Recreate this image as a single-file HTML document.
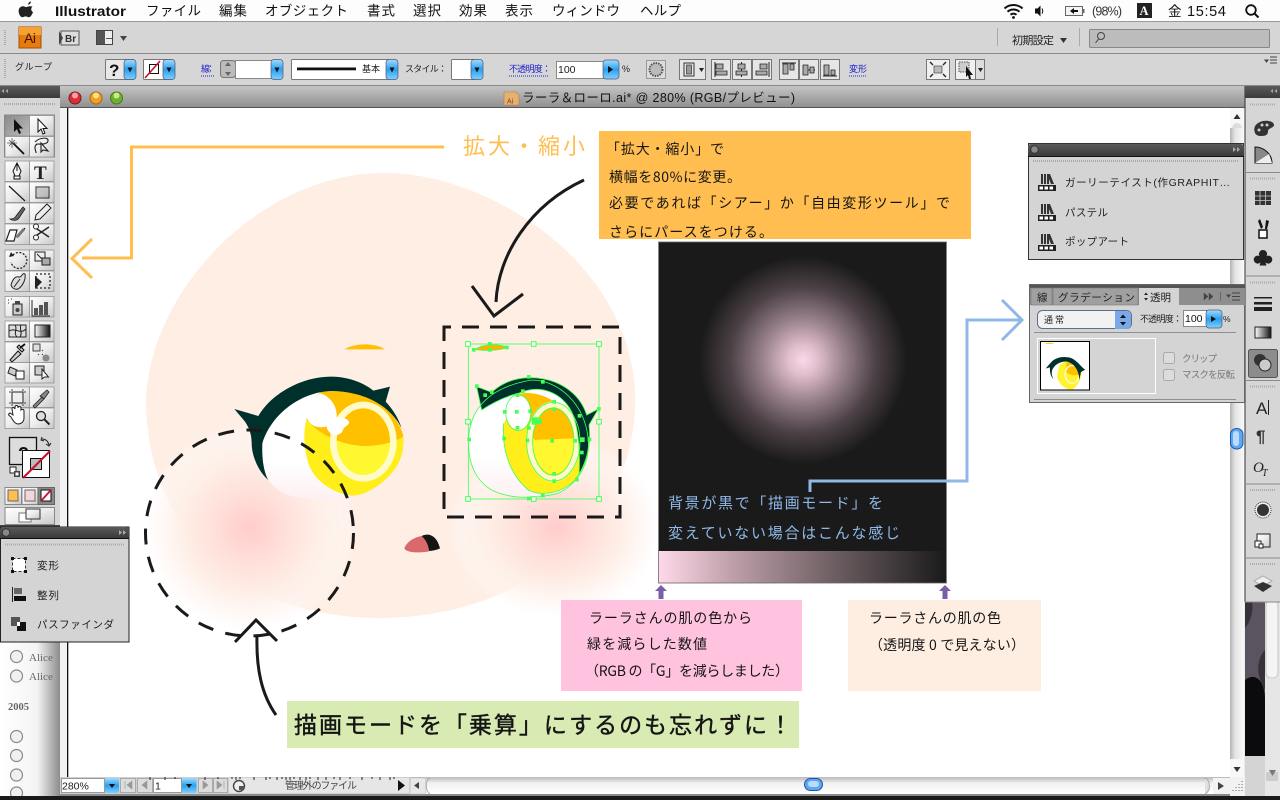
<!DOCTYPE html>
<html lang="ja"><head><meta charset="utf-8"><title>Illustrator</title>
<style>
html,body{margin:0;padding:0;background:#fff;width:1280px;height:800px;overflow:hidden}
svg{display:block}
text{font-family:"Liberation Sans","Noto Sans CJK JP",sans-serif;white-space:pre}
.m{font-size:13.5px;fill:#111}
.h{font-family:"WenQuanYi Zen Hei","Noto Sans CJK JP",sans-serif;font-size:14px;fill:#151515}
.s{font-size:9px;fill:#222}
.b{font-size:9px;fill:#2222cc}
.p{font-size:10.5px;fill:#222}
.g{font-size:9.5px;fill:#777}
.hd{fill:#44ff55;stroke:none}
</style></head><body>
<svg xmlns="http://www.w3.org/2000/svg" width="1280" height="800" viewBox="0 0 1280 800">
<defs>
<linearGradient id="tb" x1="0" y1="0" x2="0" y2="1"><stop offset="0" stop-color="#c4c4c4"/><stop offset="1" stop-color="#8e8e8e"/></linearGradient>
<linearGradient id="dh" x1="0" y1="0" x2="0" y2="1"><stop offset="0" stop-color="#5a5a5a"/><stop offset="1" stop-color="#3a3a3a"/></linearGradient>
<linearGradient id="bl" x1="0" y1="0" x2="0" y2="1"><stop offset="0" stop-color="#9fdcff"/><stop offset=".5" stop-color="#2aa0ee"/><stop offset="1" stop-color="#7fd0ff"/></linearGradient>
<linearGradient id="cell" x1="0" y1="0" x2="1" y2="1"><stop offset="0" stop-color="#fff"/><stop offset=".5" stop-color="#ececec"/><stop offset="1" stop-color="#c8c8c8"/></linearGradient>
<linearGradient id="sel" x1="0" y1="0" x2="1" y2="1"><stop offset="0" stop-color="#8a8a8a"/><stop offset="1" stop-color="#bbb"/></linearGradient>
<linearGradient id="desk" x1="0" y1="0" x2="1" y2="0"><stop offset="0" stop-color="#fff"/><stop offset=".62" stop-color="#f4f4f4"/><stop offset="1" stop-color="#8c8c8c"/></linearGradient>
<linearGradient id="vs" x1="0" y1="0" x2="1" y2="0"><stop offset="0" stop-color="#b4b4b4"/><stop offset=".35" stop-color="#e4e4e4"/><stop offset="1" stop-color="#fafafa"/></linearGradient>
<linearGradient id="hs" x1="0" y1="0" x2="0" y2="1"><stop offset="0" stop-color="#b8b8b8"/><stop offset=".35" stop-color="#f0f0f0"/><stop offset="1" stop-color="#fff"/></linearGradient>
<linearGradient id="bar" x1="0" y1="0" x2="1" y2="0"><stop offset="0" stop-color="#ffd9ea"/><stop offset=".25" stop-color="#bfa0aa"/><stop offset=".6" stop-color="#6f6064"/><stop offset="1" stop-color="#1a1a1a"/></linearGradient>
<linearGradient id="ey" x1="0" y1="0" x2="0" y2="1"><stop offset=".65" stop-color="#fff"/><stop offset="1" stop-color="#fdf0f2"/></linearGradient>
<linearGradient id="gr" x1="0" y1="0" x2="1" y2="0"><stop offset="0" stop-color="#fff"/><stop offset="1" stop-color="#111"/></linearGradient>
<radialGradient id="glow" gradientUnits="userSpaceOnUse" cx="803" cy="360" r="104"><stop offset="0" stop-color="#fcd9e9"/><stop offset=".14" stop-color="#e2bfcd"/><stop offset=".4" stop-color="#97808a"/><stop offset=".7" stop-color="#4c4146"/><stop offset="1" stop-color="#1a1a1a"/></radialGradient>
<radialGradient id="ck"><stop offset="0" stop-color="#ffcccc"/><stop offset=".32" stop-color="#ffdfd9"/><stop offset=".62" stop-color="#feeee6" stop-opacity=".95"/><stop offset=".85" stop-color="#fff6f3" stop-opacity=".6"/><stop offset="1" stop-color="#fff" stop-opacity="0"/></radialGradient>
<g id="c"><rect width="24.5" height="20.5" fill="url(#cell)" stroke="#8a8a8a" stroke-width=".7"/></g>
<g id="bb"><rect width="12" height="20" rx="3" fill="url(#bl)" stroke="#557" stroke-width=".7"/><path d="M3.5 8h5l-2.5 5z" fill="#111"/></g>
<g id="lib"><rect x="-9" y="3" width="18" height="6" fill="#222"/><rect x="-7.5" y="4.5" width="3.5" height="3" fill="#fff"/><rect x="-2.5" y="4.5" width="3.5" height="3" fill="#fff"/><rect x="2.5" y="4.5" width="3.5" height="3" fill="#fff"/><path d="M-6-8h2v10h-2zM-3-8h2v10h-2zM0-8l3 0 4 10h-3l-2-5v5h-2z" fill="#333"/></g>
<g id="ab"><rect width="19" height="20" fill="#e6e6e6" stroke="#777"/></g>
<g id="radio"><circle r="6" fill="#f0f0f0" stroke="#888" stroke-width="1.2"/></g>
</defs>

<!-- desktop -->
<rect width="1280" height="800" fill="#ddd"/>
<rect x="0" y="640" width="60" height="156" fill="url(#desk)"/>
<use href="#radio" x="16.5" y="656.500"/><use href="#radio" x="16.5" y="676"/>
<text x="29" y="661" font-size="11" fill="#666" style="font-family:'Liberation Serif',serif">Alice</text>
<text x="29" y="680" font-size="11" fill="#666" style="font-family:'Liberation Serif',serif">Alice</text>
<text x="8" y="710" font-size="10.500" font-weight="bold" fill="#666" style="font-family:'Liberation Serif',serif">2005</text>
<use href="#radio" x="16.5" y="736.500"/><use href="#radio" x="16.5" y="755.500"/><use href="#radio" x="16.5" y="775"/><use href="#radio" x="16.5" y="793"/>

<!-- right desktop piece -->
<rect x="1245" y="600" width="20" height="156" fill="#5a5360"/>
<path d="M1245 680C1255 672 1265 680 1265 700V756H1245Z" fill="#0b0a0c"/>
<path d="M1245 600h7c2 14-3 24-7 28zM1265 650c-8 8-10 25 0 40z" fill="#37323a"/>
<rect x="1245" y="756" width="20" height="40" fill="#d4d4d4"/>
<rect x="1265" y="600" width="15" height="196" fill="#e6e6e6"/>
<rect x="1266" y="600" width="12" height="78" rx="5" fill="#f4f4f4" stroke="#aaa" stroke-width=".6"/>
<rect x="1266" y="772" width="12" height="9" fill="#ccc"/>
<path d="M1269 770h7l-3.500 6z" fill="#777"/>

<!-- menu bar -->
<rect width="1280" height="21" fill="#fdfdfd"/>
<rect y="21" width="1280" height="1" fill="#9a9a9a"/>
<g transform="translate(-4.500 -.8) scale(1.18)">
<path d="M27.500 4.500c.3-1.400 1.200-2.400 2.500-2.700.1 1.500-1 2.800-2.500 2.700zM31.500 6.200c-1.500.8-1.800 3.500.3 4.800-.8 2-2.100 4.500-3.700 4.300-1-.1-1.600-.7-2.600-.7s-1.600.6-2.600.7C20.500 15.300 18.800 10.500 20 8c.9-2 3.500-2.500 5-1.600.6.300 1.300.3 2.100 0 1.500-.7 3.400-.5 4.400-.200z" fill="#222"/>
</g>
<text x="55" y="16" font-size="14" font-weight="bold" fill="#111" textLength="71" lengthAdjust="spacingAndGlyphs">Illustrator</text>
<text class="m" x="146" y="15.500" textLength="55">ファイル</text>
<text class="m" x="219" y="15.500" textLength="28">編集</text>
<text class="m" x="265" y="15.500" textLength="83">オブジェクト</text>
<text class="m" x="367" y="15.500" textLength="28">書式</text>
<text class="m" x="413" y="15.500" textLength="28">選択</text>
<text class="m" x="459" y="15.500" textLength="28">効果</text>
<text class="m" x="505" y="15.500" textLength="28">表示</text>
<text class="m" x="552" y="15.500" textLength="68">ウィンドウ</text>
<text class="m" x="640" y="15.500" textLength="41">ヘルプ</text>
<path d="M1004.500 8.500a13.500 13.500 0 0 1 18 0M1007.500 11.800a9 9 0 0 1 12 0M1010.500 14.800a4.500 4.500 0 0 1 6 0" fill="none" stroke="#111" stroke-width="2"/><circle cx="1013.500" cy="17.500" r="1.400" fill="#111"/>
<path d="M1035 8.500h2.500l3-3v11l-3-3H1035z" fill="#111"/><path d="M1042 8.500q1.500 2.500 0 5" fill="none" stroke="#111"/>
<rect x="1065.500" y="6.500" width="17" height="9" fill="#f4f4f4" stroke="#666"/><path d="M1070 11l4-3v2h4v2h-4v2z" fill="#111"/><rect x="1083" y="9" width="1.500" height="4" fill="#666"/>
<text x="1092" y="15.500" font-size="12.500" fill="#333" textLength="30">(98%)</text>
<rect x="1137" y="3" width="15" height="15" fill="#222"/><text x="1139.500" y="15" font-size="12.500" font-weight="bold" fill="#fff" style="font-family:'Liberation Serif',serif">A</text>
<text class="m" x="1168" y="16">金</text>
<text x="1187" y="16" font-size="14.500" fill="#111" textLength="39">15:54</text>
<circle cx="1251" cy="10" r="4.800" fill="none" stroke="#111" stroke-width="1.800"/><path d="M1254.500 13.500l4 4" stroke="#111" stroke-width="2"/>

<!-- app bar -->
<rect y="22" width="1280" height="31" fill="#d6d6d6"/>
<rect y="53" width="1280" height="1" fill="#8a8a8a"/>
<path d="M5 30v16" stroke="#aaa" stroke-dasharray="1 1" stroke-width="2"/>
<rect x="19" y="27" width="22" height="21" fill="#e77b10" stroke="#a65000"/>
<rect x="19" y="27" width="22" height="8" fill="#f7a033"/>
<text x="24" y="43" font-size="14" fill="#3a1800" textLength="12">Ai</text>
<rect x="61" y="31" width="18" height="14" fill="#ddd" stroke="#555"/><path d="M59 31l4 7-4 7z" fill="#444"/>
<text x="65" y="42" font-size="10" font-weight="bold" fill="#333">Br</text>
<rect x="96.500" y="30.500" width="16" height="14" fill="#eee" stroke="#444"/><rect x="97" y="31" width="8" height="13" fill="#555"/><rect x="106" y="38" width="6" height="1" fill="#555"/>
<path d="M120 36h7l-3.500 5z" fill="#444"/>
<path d="M997.500 28v18M1079.500 28v18" stroke="#aaa"/>
<text x="1012" y="44" font-size="11" fill="#222" textLength="42">初期設定</text><path d="M1060 38h7l-3.500 5z" fill="#333"/>
<rect x="1089.500" y="29.500" width="180" height="18" rx="1" fill="#bcbcbc" stroke="#888"/>
<circle cx="1101" cy="36" r="3.500" fill="none" stroke="#444"/><path d="M1098.500 39l-3 4" stroke="#444"/>

<!-- control bar -->
<rect y="54" width="1280" height="32" fill="#d6d6d6"/>
<rect y="85" width="1280" height="1" fill="#8a8a8a"/>
<path d="M5 59v20" stroke="#aaa" stroke-dasharray="1 1" stroke-width="2"/>
<text class="s" x="15" y="70" textLength="37">グループ</text>
<rect x="105.500" y="59.500" width="28" height="20" rx="1" fill="#e8e8e8" stroke="#777"/><use href="#bb" x="124" y="59.500"/>
<text x="109" y="76" font-size="17" font-weight="bold" fill="#111">?</text>
<rect x="143.500" y="59.500" width="28" height="20" rx="1" fill="#fff" stroke="#777"/><use href="#bb" x="163" y="59.500"/>
<rect x="149.500" y="64.500" width="9" height="9" fill="#fff" stroke="#111"/><path d="M145 78l15-17" stroke="#c8102e" stroke-width="1.600"/>
<text class="b" x="201" y="72" textLength="14">線：</text><path d="M201 76h14" stroke="#2222cc" stroke-dasharray="1 1"/>
<rect x="220.500" y="60.500" width="15" height="17" rx="3" fill="#bbb" stroke="#777"/><path d="M228 62l3 4h-6zM228 76l-3-4h6z" fill="#666"/>
<rect x="235.500" y="60.500" width="36" height="18" fill="#fff" stroke="#888"/><use href="#bb" x="271" y="59.500"/>
<rect x="291.500" y="59.500" width="98" height="20" rx="1" fill="#fff" stroke="#777"/><rect x="297" y="67.500" width="59" height="2.800" fill="#111"/>
<text class="s" x="362" y="72" textLength="18">基本</text><use href="#bb" x="386" y="59.500"/>
<text class="s" x="405" y="72" textLength="42">スタイル：</text>
<rect x="451.500" y="59.500" width="24" height="20" rx="1" fill="#fff" stroke="#777"/><use href="#bb" x="471" y="59.500"/>
<text class="b" x="509" y="72" textLength="42">不透明度：</text><path d="M509 76h40" stroke="#2222cc" stroke-dasharray="1 1"/>
<rect x="556.500" y="61.500" width="47" height="17" fill="#fff" stroke="#888"/><text x="558" y="73" font-size="10.500" fill="#222">100</text>
<rect x="603" y="60" width="16" height="19" rx="3" fill="url(#bl)" stroke="#557" stroke-width=".7"/><path d="M608 66l5 3.500-5 3.500z" fill="#111"/>
<text x="622" y="72" font-size="9" fill="#222">%</text>
<rect x="646.500" y="60.500" width="19" height="18" fill="#ddd" stroke="#999"/><circle cx="656" cy="69.500" r="6.500" fill="#bbb" stroke="#555" stroke-dasharray="1.500 1" stroke-width="2"/>
<rect x="679.500" y="59.500" width="26" height="20" fill="#e6e6e6" stroke="#777"/><rect x="684" y="63" width="10" height="13" fill="none" stroke="#333"/><rect x="686.500" y="65" width="5" height="9" fill="#999" stroke="#333" stroke-width=".7"/><path d="M699 68h5l-2.500 4z" fill="#222"/>
<use href="#ab" x="711.500" y="59.500"/><use href="#ab" x="732.500" y="59.500"/><use href="#ab" x="752.500" y="59.500"/><use href="#ab" x="779.500" y="59.500"/><use href="#ab" x="799.500" y="59.500"/><use href="#ab" x="820.500" y="59.500"/>
<path d="M715 62v15M769 62v15M741.500 62v15M782 63h14M803 70h12M823 76h14" stroke="#222" fill="none"/>
<path d="M716 64h7v5h-7zM716 71h11v4h-11zM738 64h7v5h-7zM736 71h11v4h-11zM760 64h7v5h-7zM756 71h11v4h-11zM783 64h5v10h-5zM790 64h4v6h-4zM803 65h5v10h-5zM810 67h4v6h-4zM824 65h5v10h-5zM831 70h4v5h-4z" fill="#aaa" stroke="#222" stroke-width=".8"/>
<text class="b" x="849" y="72" textLength="18">変形</text><path d="M849 76h18" stroke="#2222cc" stroke-dasharray="1 1"/>
<rect x="926.500" y="59.500" width="23" height="20" fill="#f0f0f0" stroke="#777"/><rect x="934" y="66" width="8" height="7" fill="#bbb" stroke="#333" stroke-width=".6"/><path d="M930 62l3 3M946 62l-3 3M930 77l3-3M946 77l-3-3" stroke="#222" stroke-width="1.400"/>
<rect x="955.500" y="59.500" width="20" height="20" fill="#f0f0f0" stroke="#777"/><rect x="975.500" y="59.500" width="9" height="20" fill="#ddd" stroke="#777"/>
<rect x="959" y="62" width="10" height="10" fill="#ccc" stroke="#555" stroke-dasharray="1.500 1"/><path d="M966 66l7 9-3 0 1 4-2 0-1-4-2 2z" fill="#111"/><path d="M978 68h5l-2.500 4z" fill="#222"/>
<path d="M1265 60h3l-1.500 2zM1270 57h7M1270 60h7M1270 63h7" stroke="#444" fill="#444" stroke-width="1"/>

<!-- left panel -->
<rect x="0" y="86" width="60" height="442" fill="#d6d6d6"/>
<rect x="0" y="86" width="60" height="12" fill="url(#dh)"/>
<path d="M4 89l-2.500 2 2.500 2zM8 89l-2.500 2 2.500 2z" fill="#aaa"/>
<path d="M4 104h52" stroke="#aaa" stroke-dasharray="1 1" stroke-width="2"/>
<rect x="4.500" y="115" width="50" height="42" fill="none" stroke="#888"/>
<g>
<rect x="5" y="115.500" width="24.500" height="20.500" fill="url(#sel)" stroke="#8a8a8a" stroke-width=".7"/>
<use href="#c" x="29.500" y="115.500"/><use href="#c" x="5" y="136.500"/><use href="#c" x="29.500" y="136.500"/>
<use href="#c" x="5" y="161"/><use href="#c" x="29.500" y="161"/><use href="#c" x="5" y="182"/><use href="#c" x="29.500" y="182"/><use href="#c" x="5" y="203"/><use href="#c" x="29.500" y="203"/><use href="#c" x="5" y="224"/><use href="#c" x="29.500" y="224"/>
<use href="#c" x="5" y="250"/><use href="#c" x="29.500" y="250"/><use href="#c" x="5" y="271"/><use href="#c" x="29.500" y="271"/>
<use href="#c" x="5" y="296.500"/><use href="#c" x="29.500" y="296.500"/>
<use href="#c" x="5" y="321"/><use href="#c" x="29.500" y="321"/><use href="#c" x="5" y="342"/><use href="#c" x="29.500" y="342"/><use href="#c" x="5" y="362.500"/><use href="#c" x="29.500" y="362.500"/>
<use href="#c" x="5" y="387"/><use href="#c" x="29.500" y="387"/><use href="#c" x="5" y="408"/><use href="#c" x="29.500" y="408"/>
</g>
<!-- tool icons -->
<path d="M14 119l0 13 3-3 2 5 2-1-2-4.500 4 0z" fill="#111"/>
<path d="M38 119l0 13 3-3 2 5 2-1-2-4.500 4 0z" fill="#fff" stroke="#111"/>
<path d="M13 143l11 11" stroke="#111" stroke-width="1.800"/><path d="M9 140l6 6M15 140l-6 6M12 138v10M7 143h10" stroke="#555" stroke-width=".8"/>
<path d="M35 142c5-5 14-5 13-1s-8 3-11 3c-4 3-1 6-1 9M41 143l0 9 2-2 5 1z" fill="none" stroke="#222" stroke-width="1.100"/>
<path d="M17 163l4 8-2 5h-4l-2-5zM17 163v8M14 176h6v3h-6z" fill="#f4f4f4" stroke="#111"/>
<text x="34" y="179" font-size="19" fill="#222" style="font-family:'Liberation Serif',serif" font-weight="bold">T</text>
<path d="M9 186l16 15" stroke="#222" stroke-width="1.300"/>
<rect x="36" y="187" width="13" height="11" fill="url(#cell)" stroke="#222"/><rect x="37" y="188" width="11" height="9" fill="#999" opacity=".5"/>
<path d="M10 219c3 0 5-1 6-3l7-9 2 2-6 9c-2 3-6 3-9 1z" fill="#666" stroke="#222" stroke-width=".8"/>
<path d="M35 220l1-5 11-11 4 4-11 11zM35 220l5-1" fill="#eee" stroke="#222" stroke-width="1"/>
<path d="M10 230h7l-3 11h-8z M19 236l6-8" fill="#fff" stroke="#222" stroke-width="1.200"/><path d="M15 237l8-9 2 2-7 8z" fill="#777"/>
<path d="M34 227l15 10M34 237l15-10" stroke="#222" stroke-width="1.400"/><circle cx="36" cy="226.500" r="2.500" fill="#fff" stroke="#222"/><circle cx="36" cy="237.500" r="2.500" fill="#fff" stroke="#222"/>
<path d="M13 255a8 8 0 1 1-2 7" fill="none" stroke="#222" stroke-dasharray="2 1.500" stroke-width="1.300"/><path d="M11 252l3 4-5 1z" fill="#222"/>
<rect x="35" y="252" width="10" height="9" fill="#eee" stroke="#222"/><rect x="42" y="258" width="8" height="7" fill="#aaa" stroke="#222"/><path d="M37 254l5 5" stroke="#222"/>
<path d="M11 285c2-7 5-9 8-8s3-5 6-3c1 5-2 12-7 15-3 1-6-1-7-4z" fill="#ddd" stroke="#222"/><path d="M14 287l6-8" stroke="#222"/>
<path d="M35 276l7 6-7 7z" fill="#222"/><rect x="36" y="274" width="14" height="14" fill="none" stroke="#222" stroke-dasharray="2 2" stroke-width="1.300"/>
<rect x="13" y="304" width="9" height="11" fill="#ccc" stroke="#222"/><rect x="15" y="301" width="5" height="3" fill="#444"/><circle cx="17.500" cy="310" r="2" fill="#444"/><path d="M8 300h1M11 299h1M8 303h1" stroke="#333"/>
<rect x="34" y="308" width="4" height="7" fill="#555"/><rect x="39" y="305" width="4" height="10" fill="#555"/><rect x="44" y="302" width="4" height="13" fill="#555"/><path d="M32 300v16h18" fill="none" stroke="#222"/>
<rect x="9" y="325" width="17" height="12" fill="#ddd" stroke="#222"/><path d="M9 331c6-4 11 4 17-2M15 325c3 4-2 8 2 12M21 325c-2 4 2 8-1 12" fill="none" stroke="#222"/>
<rect x="35" y="325" width="15" height="12" fill="url(#gr)" stroke="#222"/>
<path d="M10 360l8-9 3 3-9 8zM19 345l5 5-2 2-5-5z" fill="#ccc" stroke="#111"/><path d="M20 348l5-4" stroke="#111" stroke-width="2"/>
<rect x="33" y="344" width="7" height="7" fill="#ddd" stroke="#444"/><circle cx="46" cy="358" r="3.500" fill="#888"/><path d="M42 350l1 1M42 354l1 1M38 354l1 1" stroke="#444"/>
<path d="M10 367l7 3-2 6-7-3z" fill="#ccc" stroke="#222"/><rect x="16" y="371" width="8" height="8" fill="#fff" stroke="#222"/>
<rect x="35" y="366" width="9" height="9" fill="#ccc" stroke="#222"/><path d="M42 369l0 10 2.500-2 4 0z" fill="#fff" stroke="#222"/>
<rect x="12" y="392" width="11" height="11" fill="#eee" stroke="#222"/><path d="M9 392h2M24 392h2M9 403h2M24 403h2M12 389v2M23 389v2M12 404v2M23 404v2" stroke="#444"/>
<path d="M33 406l9-9 2 2-9 9zM40 396l7-6 2 2-5 7z" fill="#888" stroke="#222" stroke-width=".8"/>
<path d="M11 417c-3-2-3-3-1-4l3 2-1-6c0-2 2-2 3 0v-2c0-2 3-2 3 0v1c0-2 3-2 3 0v2c1-1 3-1 3 1v7c0 4-3 6-6 6s-5-3-7-7z" fill="#fff" stroke="#222"/>
<circle cx="41" cy="416" r="4.500" fill="#ddd" stroke="#222" stroke-width="1.300"/><path d="M44.500 419.500l5 5" stroke="#222" stroke-width="2"/>
<!-- fill/stroke -->
<rect x="9.500" y="437.500" width="27" height="27" fill="#ddd" stroke="#111" stroke-width="1.300"/>
<text x="18" y="460" font-size="18" font-weight="bold" fill="#111">?</text>
<rect x="22.500" y="450.500" width="27" height="27" fill="#fff" stroke="#111"/>
<rect x="30.500" y="458.500" width="11" height="11" fill="#bbb" stroke="#111"/>
<path d="M23 478l27-27" stroke="#c8102e" stroke-width="2"/>
<path d="M42 439c4 0 6 2 7 6M46 444l3 2 2-3M42 437l-1 3 3 1" fill="none" stroke="#222"/>
<rect x="10" y="467" width="6" height="6" fill="#fff" stroke="#222"/><rect x="14" y="471" width="6" height="6" fill="#444"/><rect x="15.500" y="472.500" width="3" height="3" fill="#fff"/>
<rect x="5" y="487.500" width="16.500" height="17" fill="url(#cell)" stroke="#888"/><rect x="8" y="490" width="10" height="11" fill="#ffbe4f" stroke="#666"/>
<rect x="22" y="487.500" width="16" height="17" fill="url(#cell)" stroke="#888"/><rect x="25" y="490" width="10" height="11" fill="#f5d5dc" stroke="#666"/>
<rect x="38" y="487.500" width="16.500" height="17" fill="#888" stroke="#666"/><rect x="41" y="490" width="10" height="11" fill="#fff" stroke="#111"/><path d="M41 501l10-11" stroke="#c8102e" stroke-width="1.800"/>
<rect x="5" y="507.500" width="49.500" height="17" fill="url(#cell)" stroke="#888"/>
<rect x="19" y="513" width="12" height="9" fill="#fff" stroke="#777"/><rect x="26" y="509" width="14" height="10" fill="url(#cell)" stroke="#333"/>
<rect x="0" y="525" width="60" height="4" fill="#444"/>

<!-- document window -->
<rect x="60" y="86" width="1185" height="22" fill="url(#tb)"/>
<rect x="60" y="107" width="1185" height="1.500" fill="#555"/>
<rect x="60" y="108" width="7" height="669" fill="#f2f2f2"/>
<rect x="67" y="108" width="1163" height="669" fill="#fff"/>
<rect x="67" y="108" width="1.300" height="669" fill="#111"/>
<circle cx="75" cy="98" r="6" fill="#d5303a" stroke="#7a1c22"/><circle cx="75" cy="95.500" r="3" fill="#f9a0a0"/>
<circle cx="96" cy="98" r="6" fill="#f0a020" stroke="#a56a10"/><circle cx="96" cy="95.500" r="3" fill="#ffdf90"/>
<circle cx="116.500" cy="98" r="6" fill="#6fb02c" stroke="#457a18"/><circle cx="116.500" cy="95.500" r="3" fill="#c5ec90"/>
<path d="M504 92h12l3 3v10h-15z" fill="#e6b070" stroke="#b88040" stroke-width=".6"/><text x="507" y="103.500" font-size="7" fill="#7a4510">Ai</text>
<text x="522" y="102" font-size="12.500" fill="#111" textLength="273">ラーラ＆ローロ.ai* @ 280% (RGB/プレビュー)</text>

<!-- scrollbars -->
<rect x="1230" y="108" width="14.500" height="669" fill="url(#vs)"/>
<rect x="1230" y="108" width="14" height="20" fill="#f8f8f8"/><path d="M1232 128a5 5 0 0 1 10 0" fill="#ddd"/>
<path d="M1233.500 119l3.500-5 3.500 5z" fill="#333"/>
<rect x="1230" y="759" width="14" height="18" fill="#f8f8f8"/><path d="M1233.500 767h7l-3.500 5z" fill="#333"/>
<rect x="1230.500" y="428.500" width="12.500" height="20.500" rx="6" fill="#5fa8f0" stroke="#1c55b0"/><rect x="1233" y="431" width="6" height="15" rx="3" fill="#b9dcff"/>

<!-- artwork -->
<path d="M146 400C150 290 260 173 385 173C490 173 635 265 635 400C635 530 520 618 380 618C230 618 146 520 146 400Z" fill="#feeee4"/>
<ellipse cx="250" cy="528" rx="108" ry="106" fill="url(#ck)"/>
<ellipse cx="556" cy="528" rx="108" ry="92" fill="url(#ck)"/>

<g transform="translate(225 330) scale(.33333)">
<path d="M358 58C390 38 450 38 480 58Z" fill="#ffc000"/>
<path d="M112 350C130 260 220 185 320 183L420 200L500 420L400 497C330 510 230 510 190 495C160 485 140 465 130 450C118 430 110 390 112 350Z" fill="url(#ey)"/>
<path d="M245 265C235 300 235 350 250 400C270 460 340 497 390 497C440 490 500 440 520 400C535 370 537 340 535 320L300 200Z" fill="#ffee1a"/>
<ellipse cx="415" cy="335" rx="90" ry="112" fill="#fff830"/>
<path d="M245 268C270 300 330 345 420 348C470 348 510 335 535 320C530 290 500 235 440 205C400 188 340 180 290 185C270 195 250 240 245 268Z" fill="#ffc000"/>
<ellipse cx="415" cy="335" rx="90" ry="110" fill="none" stroke="#fffbc8" stroke-width="20"/>
<path d="M245 262C250 235 265 205 285 190C310 195 338 225 335 262C350 262 375 265 372 280C365 290 355 290 352 305C340 322 310 318 305 290C280 295 255 290 245 262Z" fill="#fff"/>
<path d="M28 237L100 258C140 190 230 140 320 140C370 140 420 160 445 182L495 170L482 215C505 240 520 265 530 295C500 235 430 185 320 183C230 185 140 250 112 340C110 390 118 430 130 450C95 420 80 370 80 340C80 310 70 290 60 275Z" fill="#00302c"/>
<path d="M538 655C545 635 570 620 592 618C603 630 610 645 612 664C580 670 545 668 538 655Z" fill="#d9696b"/>
<path d="M590 618C610 608 635 615 645 655C635 660 622 662 612 663C610 645 603 630 590 618Z" fill="#151515"/>

<!-- mini eye -->
<path d="M730 330C735 230 800 170 920 150C1000 150 1080 220 1090 330C1095 400 1060 460 1000 490C940 505 860 510 800 480C750 450 730 400 730 330Z" fill="url(#ey)"/>
<path d="M836 280C830 350 850 430 910 480C950 500 1010 490 1050 450C1080 410 1095 360 1090 320L1000 220L890 190Z" fill="#ffee1a"/>
<path d="M880 192C930 180 990 205 1020 245C1035 265 1050 300 1052 325L930 330C905 300 890 240 880 192Z" fill="#ffc000"/>
<path d="M925 330L1050 325C1055 370 1030 430 985 432C950 430 920 380 925 330Z" fill="#fff830"/>
<ellipse cx="985" cy="335" rx="72" ry="112" fill="none" stroke="#fffbc8" stroke-width="18"/>
<ellipse cx="880" cy="248" rx="36" ry="52" fill="#fff"/>
<path d="M750 58C780 40 820 42 850 52C820 62 780 64 750 58Z" fill="#ffb000"/>
<path d="M755 170L800 187C830 160 870 143 915 143C1000 143 1065 190 1085 255L1120 237L1092 285C1098 330 1090 390 1062 435C1065 390 1065 300 1040 245C1010 190 950 160 880 190C840 200 800 220 770 240Z" fill="#00302c"/>
<g fill="none" stroke="#44ff55" stroke-width="2.500">
<path d="M730 330C735 230 800 170 920 150C1000 150 1080 220 1090 330C1095 400 1060 460 1000 490C940 505 860 510 800 480C750 450 730 400 730 330Z"/>
<path d="M836 280C830 350 850 430 910 480C950 500 1010 490 1050 450C1080 410 1095 360 1090 320"/>
<ellipse cx="985" cy="335" rx="80" ry="118"/><ellipse cx="985" cy="335" rx="62" ry="100"/>
<ellipse cx="880" cy="248" rx="38" ry="54"/>
<path d="M755 170L800 187C830 160 870 143 915 143C1000 143 1065 190 1085 255L1120 237L1092 285C1098 330 1090 390 1062 435C1065 390 1065 300 1040 245C1010 190 950 160 880 190C840 200 800 220 770 240Z"/>
<path d="M750 58C780 40 820 42 850 52C820 62 780 64 750 58Z"/>
<rect x="730" y="42" width="392" height="465"/>
</g>
<g class="hd">
<rect x="741" y="54" width="11" height="11"/><rect x="789" y="36" width="11" height="11"/><rect x="789" y="54" width="11" height="11"/><rect x="840" y="47" width="11" height="11"/>
<rect x="750" y="163" width="11" height="11"/><rect x="795" y="181" width="11" height="11"/><rect x="775" y="190" width="11" height="11"/><rect x="906" y="135" width="11" height="11"/><rect x="888" y="178" width="11" height="11"/><rect x="948" y="150" width="11" height="11"/><rect x="982" y="210" width="11" height="11"/><rect x="1116" y="231" width="11" height="11"/>
<rect x="727" y="323" width="11" height="11"/><rect x="832" y="320" width="11" height="11"/><rect x="834" y="240" width="11" height="11"/><rect x="870" y="240" width="11" height="11"/><rect x="910" y="238" width="11" height="11"/><rect x="872" y="190" width="11" height="11"/><rect x="872" y="288" width="11" height="11"/><rect x="906" y="288" width="11" height="11"/><rect x="902" y="326" width="11" height="11"/>
<rect x="920" y="262" width="22" height="22"/><rect x="938" y="268" width="13" height="13"/><rect x="982" y="232" width="11" height="11"/><rect x="976" y="327" width="11" height="11"/><rect x="1045" y="327" width="11" height="11"/><rect x="1065" y="322" width="14" height="14"/><rect x="1088" y="323" width="11" height="11"/><rect x="1058" y="252" width="11" height="11"/><rect x="1065" y="362" width="11" height="11"/><rect x="1050" y="443" width="11" height="11"/><rect x="982" y="426" width="11" height="11"/><rect x="982" y="448" width="11" height="11"/><rect x="906" y="500" width="11" height="11"/><rect x="948" y="491" width="11" height="11"/>
</g>
<g fill="#fff" stroke="#44ff55" stroke-width="3">
<rect x="722" y="35" width="14" height="14"/><rect x="919" y="35" width="14" height="14"/><rect x="1115" y="35" width="14" height="14"/>
<rect x="722" y="268" width="14" height="14"/><rect x="1115" y="268" width="14" height="14"/>
<rect x="722" y="500" width="14" height="14"/><rect x="919" y="500" width="14" height="14"/><rect x="1115" y="500" width="14" height="14"/>
</g>
</g>

<rect x="444" y="327" width="176" height="190" fill="none" stroke="#1a1a1a" stroke-width="3" stroke-dasharray="17 11" stroke-dashoffset="10"/>
<ellipse cx="249.500" cy="533" rx="104" ry="103" fill="none" stroke="#1a1a1a" stroke-width="3" stroke-dasharray="16 12.500"/>

<!-- arrows -->
<path d="M444 147H131.500V258H82M92 239L72 258.500L92 278" fill="none" stroke="#ffbe4f" stroke-width="3"/>
<path d="M584 180C530 205 498 255 496 302M472 286L494 316L523 294" fill="none" stroke="#1a1a1a" stroke-width="3"/>
<path d="M257 635C256 670 262 695 276 715M235 642L256 620L277 641" fill="none" stroke="#1a1a1a" stroke-width="3"/>

<!-- labels -->
<text class="h" x="463" y="154" style="font-size:22px;fill:#ffbe4f" textLength="122">拡大・縮小</text>
<rect x="599" y="131" width="372" height="108" fill="#ffbe4f"/>
<text class="h" x="606" y="154" textLength="118">「拡大・縮小」で</text>
<text class="h" x="609" y="182" textLength="132">横幅を80%に変更。</text>
<text class="h" x="609" y="208" textLength="341">必要であれば「シアー」か「自由変形ツール」で</text>
<text class="h" x="609" y="237" textLength="164">さらにパースをつける。</text>

<rect x="659" y="242" width="287" height="341" fill="#1a1a1a"/>
<rect x="659" y="242" width="287" height="309" fill="url(#glow)"/>
<rect x="659" y="551" width="287" height="32" fill="url(#bar)"/>
<rect x="658.500" y="242" width="288" height="341" fill="none" stroke="#6f6469" stroke-width=".8"/>
<path d="M810 492V481H967V320H1021M1002 300L1022 320L1002 340" fill="none" stroke="#8fb8e8" stroke-width="3"/>
<text class="h" x="668" y="508" style="font-size:15px;fill:#8fb8e8" textLength="215">背景が黒で「描画モード」を</text>
<text class="h" x="668" y="538" style="font-size:15px;fill:#8fb8e8" textLength="232">変えていない場合はこんな感じ</text>

<path d="M661 585l6 6h-3.500v8h-5v-8H655zM945 585l6 6h-3.500v8h-5v-8H939z" fill="#7a5fa8"/>
<rect x="561" y="600" width="241" height="91" fill="#ffc2df"/>
<text class="h" x="589" y="623" textLength="163">ラーラさんの肌の色から</text>
<text class="h" x="587" y="649" textLength="120">緑を減らした数値</text>
<text class="h" x="585" y="676" textLength="204">（RGB の「G」を減らしました）</text>
<rect x="848" y="600" width="193" height="91" fill="#feeee2"/>
<text class="h" x="869" y="623" textLength="132">ラーラさんの肌の色</text>
<text class="h" x="869" y="650" textLength="156">（透明度 0 で見えない）</text>
<rect x="287" y="701" width="512" height="47" fill="#d7ebb3"/>
<text class="h" x="294" y="733" style="font-size:23px;stroke:#151515;stroke-width:.4" textLength="498">描画モードを「乗算」にするのも忘れずに！</text>

<!-- status bar -->
<rect x="60" y="777" width="1185" height="19" fill="#d0d0d0"/>
<rect x="60" y="794" width="1185" height="2" fill="#8a8a8a"/>
<rect x="61.500" y="778.500" width="43" height="14" fill="#fff" stroke="#999"/><text x="62" y="789.500" font-size="10.500" fill="#222">280%</text>
<rect x="105" y="778" width="14" height="15" rx="2" fill="url(#bl)"/><path d="M109 784h6l-3 4z" fill="#111"/>
<rect x="120.500" y="778.500" width="15" height="14" fill="#ddd" stroke="#aaa"/><rect x="137.500" y="778.500" width="15" height="14" fill="#ddd" stroke="#aaa"/>
<path d="M125 781v8M132 781l-5 4 5 4zM147 781l-5 4 5 4z" fill="#999" stroke="#999" stroke-width=".6"/>
<rect x="153.500" y="778.500" width="28" height="14" fill="#fff" stroke="#999"/><text x="155" y="789.500" font-size="10.500" fill="#222">1</text>
<rect x="182" y="778" width="14.500" height="15" rx="2" fill="url(#bl)"/><path d="M186 784h6l-3 4z" fill="#111"/>
<rect x="198.500" y="778.500" width="14" height="14" fill="#ddd" stroke="#aaa"/><rect x="213.500" y="778.500" width="14" height="14" fill="#ddd" stroke="#aaa"/>
<path d="M203 781l5 4-5 4zM217 781l5 4-5 4zM224 781v8" fill="#999" stroke="#999" stroke-width=".6"/>
<rect x="229" y="778" width="180" height="15" fill="#e6e6e6"/>
<circle cx="239" cy="786" r="5.500" fill="#eee" stroke="#444" stroke-width="1.400"/><path d="M239 786h5v4h-5z" fill="#555"/>
<text x="285" y="789" font-size="10" fill="#444" textLength="72">管理外のファイル</text>
<path d="M398 780l7 5.500-7 5.500z" fill="#111"/>
<path d="M150 777v3M165 777v3M175 777v2M205 777v3M218 777v2M232 777v2M236 777v3M240 777v2M254 777v3M266 777v3M270 777v2M277 777v3M282 777v2M286 777v3M290 777v3M294 777v2M300 777v3M306 777v3M310 777v2M318 777v3M326 777v3M334 777v2M340 777v3M350 777v2M362 777v3M372 777v2M380 777v3M390 777v3M394 777v2" stroke="#222"/>
<rect x="410" y="777" width="820" height="17" fill="url(#hs)"/>
<rect x="410.500" y="778" width="15" height="16" fill="#e8e8e8" stroke="#bbb" stroke-width=".5"/><path d="M419 782v7l-5-3.500z" fill="#444"/>
<path d="M430 778c-5 2-5 13 0 16" fill="none" stroke="#aaa"/>
<rect x="804.500" y="778.500" width="18" height="12" rx="6" fill="#5fa8f0" stroke="#1c55b0"/><rect x="808" y="781" width="11" height="6" rx="3" fill="#b9dcff"/>
<path d="M1205 778c6 3 6 13 0 16" fill="#e0e0e0" stroke="#aaa"/><rect x="1213" y="778" width="17" height="16" fill="#f2f2f2"/><path d="M1218 782l6 4-6 4z" fill="#444"/>
<rect x="1230" y="777" width="15" height="19" fill="#f2f2f2"/><path d="M1242 781v1M1239 784v1M1242 784v1M1236 787v1M1239 787v1M1242 787v1M1233 790v1M1236 790v1M1239 790v1M1242 790v1" stroke="#666"/>
<rect x="0" y="796" width="1280" height="4" fill="#1a1a1a"/>

<!-- left floating panel -->
<rect x=".5" y="527" width="128.500" height="115" fill="#d4d4d4" stroke="#222"/>
<path d="M0 530a3 3 0 0 1 3-3h123a3 3 0 0 1 3 3v8H0z" fill="url(#dh)"/>
<rect y="538" width="129" height="1" fill="#111"/>
<circle cx="6" cy="532.500" r="3.800" fill="#888" stroke="#333"/>
<path d="M119 530l3 2.500-3 2.500zM123 530l3 2.500-3 2.500z" fill="#aaa"/>
<path d="M5 544.500h119" stroke="#aaa" stroke-dasharray="1 1" stroke-width="2"/>
<rect x="12.500" y="558.500" width="13" height="13" fill="#fff" stroke="#333" stroke-dasharray="3 2"/><path d="M11 557h3v3h-3zM24 557h3v3h-3zM11 570h3v3h-3zM24 570h3v3h-3z" fill="#111"/>
<text class="p" x="37" y="569" textLength="22">変形</text>
<path d="M12.500 587v15" stroke="#222"/><rect x="14" y="588" width="8" height="6" fill="#666"/><rect x="14" y="596" width="12" height="5" fill="#111"/>
<text class="p" x="37" y="599" textLength="22">整列</text>
<rect x="11" y="617" width="9" height="9" fill="#555"/><rect x="17" y="622" width="9" height="9" fill="#111"/><rect x="17" y="622" width="3" height="4" fill="#fff"/>
<text class="p" x="37" y="628" textLength="77">パスファインダ</text>

<!-- right dock -->
<rect x="1245" y="86" width="35" height="516" fill="#d6d6d6"/>
<rect x="1244.500" y="86" width="1" height="516" fill="#333"/>
<rect x="1245" y="86" width="35" height="12" fill="url(#dh)"/>
<path d="M1273 89l-2.500 2 2.500 2zM1277 89l-2.500 2 2.500 2z" fill="#aaa"/>
<path d="M1245 172.500h35M1245 276h35M1245 380.500h35M1245 484h35M1245 558h35M1245 602h35" stroke="#8a8a8a"/>
<path d="M1250 104.500h25M1250 178.500h25M1250 282.500h25M1250 386.500h25M1250 490h25M1250 564h25" stroke="#aaa" stroke-dasharray="1 1" stroke-width="2"/>
<path d="M1255 133c-2-5 0-10 8-12 6-1 11 1 11 4s-6 3-6 6-1 5-7 5c-3 0-5-1-6-3z" fill="#333"/><circle cx="1262" cy="125" r="1.500" fill="#ccc"/><circle cx="1267" cy="125" r="1.500" fill="#ccc"/><circle cx="1259" cy="130" r="1.500" fill="#ccc"/>
<path d="M1255 147v16h17c0-9-8-16-17-16z" fill="#888" stroke="#111"/><path d="M1255 163l14-9 3 9z" fill="#eee"/>
<rect x="1255" y="191" width="16" height="14" fill="#333"/><path d="M1255 196h16M1255 200.500h16M1260 191v14M1265.500 191v14" stroke="#ccc" stroke-width=".8"/>
<path d="M1259 230h8v8h-8z" fill="#fff" stroke="#111" stroke-width="1.500"/><path d="M1261 229l-3-8 2-2 3 8zM1265 229l1-9 3 1-2 8z" fill="#111"/>
<path d="M1263 250a4 4 0 0 1 3.500 6 4 4 0 1 1-1 6.500l1 3h-7l1-3a4 4 0 1 1-1-6.500 4 4 0 0 1 3.500-6z" fill="#222"/>
<path d="M1254 297h18v1.500h-18zM1254 302h18v2.500h-18zM1254 307h18v4h-18z" fill="#222"/>
<rect x="1255" y="327" width="16" height="11" fill="url(#gr)" stroke="#222"/>
<rect x="1248.500" y="349.500" width="29" height="28" rx="2" fill="#8c8c8c" stroke="#555"/>
<circle cx="1260" cy="360" r="6" fill="#333"/><circle cx="1265" cy="365" r="6" fill="#ccc" stroke="#222"/>
<text x="1256" y="414" font-size="17" fill="#222">A</text><path d="M1268.500 400v15" stroke="#222"/>
<text x="1256" y="442" font-size="17" font-weight="bold" fill="#333">¶</text>
<text x="1253" y="472" font-size="15" font-style="italic" fill="#222" style="font-family:'Liberation Serif',serif">O</text>
<text x="1262" y="476" font-size="10" font-style="italic" fill="#222" style="font-family:'Liberation Serif',serif">T</text>
<circle cx="1263" cy="510" r="8" fill="#eee" stroke="#333" stroke-dasharray="1 1"/><circle cx="1263" cy="510" r="6" fill="#333"/>
<rect x="1257" y="534" width="13" height="13" fill="url(#cell)" stroke="#222"/><rect x="1255" y="541" width="6" height="6" fill="#fff" stroke="#222"/><rect x="1259" y="544" width="4" height="4" fill="#fff" stroke="#222"/>
<path d="M1263 576l9 5-9 5-9-5z" fill="#eee" stroke="#aaa"/><path d="M1254 586l9-4 9 4-9 6z" fill="#333"/>

<!-- panel 2 -->
<rect x="1028.500" y="143.500" width="215" height="116" fill="#d4d4d4" stroke="#333"/>
<path d="M1028 147a3 3 0 0 1 3-3h210a3 3 0 0 1 3 3v9h-216z" fill="url(#dh)"/>
<rect x="1028" y="156" width="216" height="1" fill="#111"/>
<circle cx="1034.500" cy="149.500" r="3.800" fill="#888" stroke="#333"/>
<path d="M1233 147l3 2.500-3 2.500zM1237 147l3 2.500-3 2.500z" fill="#aaa"/>
<path d="M1033 161h205" stroke="#aaa" stroke-dasharray="1 1" stroke-width="2"/>
<use href="#lib" x="1047" y="182"/><use href="#lib" x="1047" y="212"/><use href="#lib" x="1047" y="242"/>
<text class="p" x="1065" y="186" textLength="165">ガーリーテイスト(作GRAPHIT…</text>
<text class="p" x="1065" y="216" textLength="43">パステル</text>
<text class="p" x="1065" y="245" textLength="64">ポップアート</text>

<!-- panel 3 -->
<rect x="1029.500" y="284.500" width="215" height="118" fill="#d4d4d4" stroke="#666"/>
<rect x="1030" y="285" width="215" height="20" fill="#8e8e8e"/>
<rect x="1030" y="285" width="215" height="3" fill="#555"/>
<rect x="1031" y="288" width="21" height="17" fill="#a0a0a0" stroke="#777" stroke-width=".6"/>
<rect x="1053" y="288" width="85" height="17" fill="#a0a0a0" stroke="#777" stroke-width=".6"/>
<rect x="1139" y="288" width="40" height="18" fill="#d4d4d4"/>
<text class="p" x="1037" y="301" textLength="11">線</text>
<text class="p" x="1058" y="301" textLength="77">グラデーション</text>
<text class="p" x="1150" y="301" textLength="21">透明</text>
<path d="M1144 295l2 -2.500 2 2.500zM1144 298l2 2.500 2-2.500z" fill="#222"/>
<path d="M1204 293l4 3.500-4 3.500zM1209 293l4 3.500-4 3.500zM1220.500 292v9" fill="#444" stroke="#444" stroke-width=".5"/>
<path d="M1227 295h3l-1.500 2zM1232 293h8M1232 296.500h8M1232 300h8" stroke="#444" fill="#444"/>
<rect x="1037.500" y="310.500" width="94" height="18" rx="5" fill="#f2f2f2" stroke="#5c6f90"/>
<path d="M1115 311h11a5 5 0 0 1 5 5v8a5 5 0 0 1-5 5h-11z" fill="#7aa9e8"/>
<path d="M1120 318l3-3.500 3 3.500zM1120 322l3 3.500 3-3.500z" fill="#111"/>
<text class="s" x="1044" y="323" textLength="20">通常</text>
<text class="s" x="1140" y="322" textLength="42">不透明度：</text>
<rect x="1183.500" y="310.500" width="23" height="16" fill="#fff" stroke="#888"/><text x="1185" y="322" font-size="10.500" fill="#111">100</text>
<rect x="1206" y="310" width="16" height="18" rx="3" fill="url(#bl)" stroke="#557" stroke-width=".7"/><path d="M1211 316l5 3-5 3z" fill="#111"/>
<text x="1223" y="322" font-size="8.500" fill="#222">%</text>
<path d="M1034 332.500h202M1034 399.500h202" stroke="#8e8e8e"/>
<rect x="1037.500" y="338.500" width="118" height="55" fill="none" stroke="#fff"/>
<rect x="1040.500" y="341.500" width="49" height="48.500" fill="#fff" stroke="#000"/>
<g transform="translate(1040.500 341.500) scale(.235)">
<path d="M15 10c15-6 30-6 45 0z" fill="#ffc000"/>
<path d="M40 100C60 70 100 60 120 66L130 180L90 205C60 200 35 160 40 100Z" fill="#fff"/>
<path d="M80 100L70 150C80 185 110 205 130 205C150 200 172 170 175 130L130 70Z" fill="#fff230"/>
<path d="M110 90C140 80 165 110 170 135C150 150 125 145 110 130Z" fill="#ffc000"/>
<ellipse cx="135" cy="140" rx="30" ry="38" fill="none" stroke="#fffbc8" stroke-width="6"/>
<path d="M22 115L48 85C70 65 100 62 130 70C155 80 170 105 190 120L172 130L165 165C165 120 140 90 110 85C80 85 60 100 50 120C45 135 50 150 55 160C40 145 40 125 40 110Z" fill="#00302c"/>
</g>
<rect x="1163.500" y="352.500" width="11" height="11" rx="2" fill="#dcdcdc" stroke="#aaa"/>
<rect x="1163.500" y="369.500" width="11" height="11" rx="2" fill="#dcdcdc" stroke="#aaa"/>
<text class="g" x="1182" y="362" textLength="35">クリップ</text>
<text class="g" x="1182" y="378" textLength="53">マスクを反転</text>
</svg>
</body></html>
